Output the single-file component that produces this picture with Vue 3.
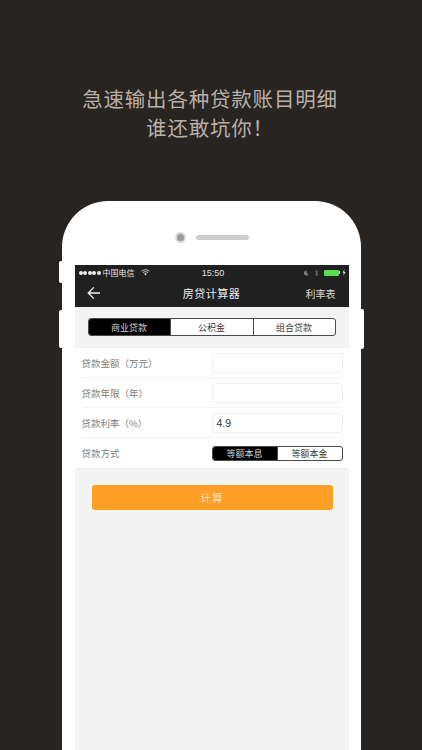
<script setup>
const tabs = ['商业贷款', '公积金', '组合贷款']
const rows = [
  { label: '贷款金额（万元）', value: '' },
  { label: '贷款年限（年）', value: '' },
  { label: '贷款利率（%）', value: '4.9' },
]
</script>

<template>
  <div class="page">
    <h1 class="headline">急速输出各种贷款账目明细<br />谁还敢坑你！</h1>
    <div class="phone">
      <span class="side side-l1"></span>
      <span class="side side-l2"></span>
      <span class="side side-r"></span>
      <div class="earpiece">
        <span class="camera"></span>
        <span class="speaker"></span>
      </div>
      <div class="screen">
        <div class="status">
          <div class="status-left">
            <span class="dots"><i v-for="n in 5" :key="n"></i></span>
            <span>中国电信</span>
            <svg class="wifi" viewBox="0 0 10 8" width="9" height="7">
              <path d="M0.5 2.6C3 0.3 7 0.3 9.5 2.6M2 4.2C3.7 2.7 6.3 2.7 8 4.2" fill="none" stroke="#e8e8e8" stroke-width="1" />
              <path d="M3.4 5.4C4.4 4.6 5.6 4.6 6.6 5.4L5 7.4Z" fill="#e8e8e8" />
            </svg>
          </div>
          <div class="status-time">15:50</div>
          <div class="status-right">
            <svg class="moon" viewBox="0 0 8 8" width="6" height="6"><path d="M5 .6A3.4 3.4 0 1 0 7.6 5.4 3.6 3.6 0 0 1 5 .6Z" fill="#7a7a7a" /></svg>
            <svg class="bt" viewBox="0 0 6 10" width="5" height="8"><path d="M1 2.6 5 6.8 3 8.8V1.2L5 3.2 1 7.4" fill="none" stroke="#7a7a7a" stroke-width=".8" /></svg>
            <span class="battery"></span>
            <span class="nub"></span>
            <svg viewBox="0 0 5 8" width="4" height="7"><path d="M3 0 .6 4.4H2.2L1.8 8 4.4 3.4H2.8Z" fill="#e4e4e4" /></svg>
          </div>
        </div>
        <div class="nav">
          <svg class="back" viewBox="0 0 14 14" width="14" height="14">
            <path d="M13 7H1.4M6.8 1.4 1.2 7l5.6 5.6" fill="none" stroke="#f2f2f2" stroke-width="1.3" />
          </svg>
          <span class="nav-title">房贷计算器</span>
          <span class="nav-action">利率表</span>
        </div>
        <div class="tab-band">
          <div class="segment segment-wide">
            <span v-for="(t, i) in tabs" :key="t" class="seg-item" :class="{ on: i === 0 }">{{ t }}</span>
          </div>
        </div>
        <div class="form">
          <div v-for="r in rows" :key="r.label" class="row">
            <span class="label">{{ r.label }}</span>
            <div class="field">{{ r.value }}</div>
          </div>
          <div class="row row-last">
            <span class="label">贷款方式</span>
            <div class="segment segment-small">
              <span class="seg-item on">等额本息</span>
              <span class="seg-item">等额本金</span>
            </div>
          </div>
        </div>
        <div class="action">
          <button class="calc">计算</button>
        </div>
      </div>
    </div>
  </div>
</template>

<style>
html, body { margin: 0; background: #272421; }
</style>

<style scoped>
.page {
  width: 422px;
  height: 750px;
  overflow: hidden;
  background: #272421;
  font-family: "Noto Sans CJK SC", "Liberation Sans", sans-serif;
  display: flex;
  flex-direction: column;
  align-items: center;
}
.headline {
  margin: 84px 2px 0 0;
  height: 117px;
  flex-shrink: 0;
  color: #b9afa9;
  font-size: 20.5px;
  font-weight: 400;
  line-height: 29px;
  letter-spacing: .8px;
  text-align: center;
}
.phone {
  position: relative;
  width: 299px;
  height: 549px;
  margin-left: 1px;
  background: #fff;
  border-radius: 46px 46px 0 0;
  flex-shrink: 0;
}
.side { position: absolute; background: #fff; }
.side-l1 { left: -3px; top: 60px; width: 3px; height: 22px; border-radius: 2px 0 0 2px; }
.side-l2 { left: -3px; top: 109px; width: 3px; height: 38px; border-radius: 2px 0 0 2px; }
.side-r { right: -3px; top: 108px; width: 3px; height: 40px; border-radius: 0 2px 2px 0; }
.earpiece {
  height: 64px;
  display: flex;
  align-items: center;
  justify-content: center;
  gap: 10px;
  box-sizing: border-box;
  padding-top: 8px;
}
.camera {
  width: 11px;
  height: 11px;
  box-sizing: border-box;
  border-radius: 50%;
  background: #9a9a9a;
  border: 2.5px solid #d8d8d8;
}
.speaker { width: 53px; height: 5px; border-radius: 3px; background: #cdcdcd; }
.screen {
  width: 274px;
  margin: 0 auto;
  height: 485px;
  background: #f4f4f4;
}
.status {
  height: 18px;
  box-sizing: border-box;
  padding: 0 3px 3px 4px;
  background: #202020;
  color: #e4e4e4;
  font-size: 8px;
  display: grid;
  grid-template-columns: 1fr auto 1fr;
  align-items: center;
}
.status-left { display: flex; align-items: center; gap: 2px; }
.dots { display: flex; gap: .5px; }
.dots i { width: 4px; height: 4px; border-radius: 50%; background: #eee; }
.wifi { margin-left: 4px; }
.status-time { font-family: "Liberation Sans", sans-serif; font-size: 9px; margin-left: 2px; }
.status-right { display: flex; align-items: center; justify-content: flex-end; gap: 2px; }
.moon { margin-right: 3px; }
.bt { margin-right: 3px; }
.battery { width: 15px; height: 6px; border-radius: 1px; background: #58dd4c; }
.nub { width: 1px; height: 3px; background: #ccc; margin-left: -2px; }
.nav {
  position: relative;
  height: 24px;
  box-sizing: border-box;
  padding-bottom: 4px;
  background: #202020;
  color: #eee;
  display: flex;
  align-items: center;
  justify-content: center;
}
.back { position: absolute; left: 12px; top: 3px; }
.nav-title { font-size: 11px; letter-spacing: .5px; }
.nav-action { position: absolute; right: 13px; font-size: 10px; color: #d8d8d8; }
.tab-band {
  height: 41px;
  box-sizing: border-box;
  border-bottom: 1px solid #ececec;
  padding: 11px 13px 0;
}
.segment {
  display: grid;
  box-sizing: border-box;
  border: 1px solid #4a4a4a;
  background: #fff;
  overflow: hidden;
  border-radius: 3px;
  color: #3c3c3c;
}
.segment-wide { grid-template-columns: 81px 83px 1fr; height: 18px; font-size: 9px; }
.segment-small { grid-template-columns: 64px 1fr; width: 131px; height: 15px; font-size: 9px; }
.seg-item {
  display: flex;
  align-items: center;
  justify-content: center;
  border-left: 1px solid #4a4a4a;
  white-space: nowrap;
}
.seg-item:first-child { border-left: 0; }
.seg-item.on { background: #000; color: #d0d0d0; }
.form { background: #fff; border-bottom: 1px solid #e9e9e9; }
.row {
  height: 30px;
  margin: 0 6px 0 7px;
  display: flex;
  align-items: center;
  justify-content: space-between;
  box-sizing: border-box;
  border-bottom: 1px solid #f3f3f3;
}
.row-last { border-bottom: 0; }
.label { font-size: 9.5px; color: #808080; white-space: nowrap; }
.field {
  width: 131px;
  height: 20px;
  box-sizing: border-box;
  border: 1px solid #efefef;
  border-radius: 3px;
  background: #fff;
  padding-left: 4px;
  font-family: "Liberation Sans", sans-serif;
  font-size: 10.5px;
  line-height: 18px;
  color: #333;
}
.action { padding: 16px 16px 0 17px; }
.calc {
  display: block;
  width: 241px;
  height: 25px;
  border: 0;
  border-radius: 3px;
  background: #ff9f26;
  color: #fbe6c8;
  font-family: inherit;
  font-size: 10.5px;
  letter-spacing: 1px;
  padding: 0;
}
</style>
